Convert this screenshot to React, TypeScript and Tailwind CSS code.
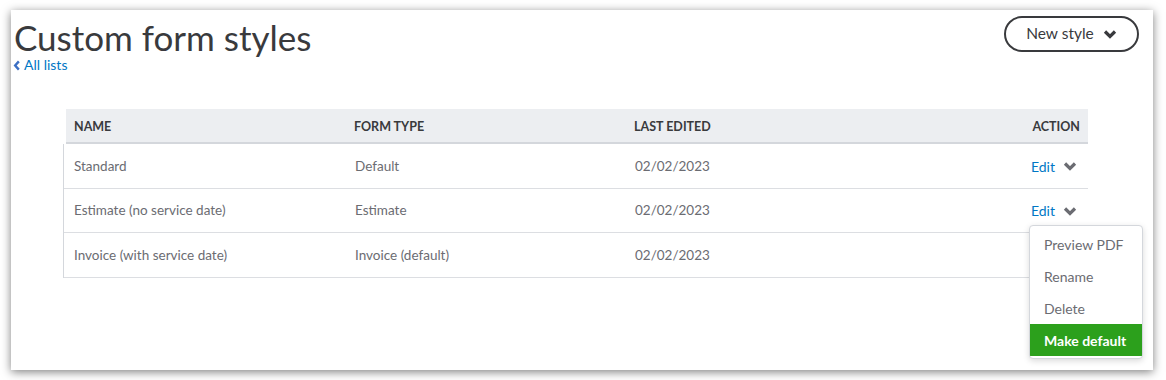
const rows = [
  { name: "Standard", type: "Default", edited: "02/02/2023", h: "h-[45px]" },
  { name: "Estimate (no service date)", type: "Estimate", edited: "02/02/2023", h: "h-[44px]" },
  { name: "Invoice (with service date)", type: "Invoice (default)", edited: "02/02/2023", h: "h-[45px]" },
];

function Chevron({ className }: { className?: string }) {
  return (
    <svg viewBox="0 0 14 10" className={className} fill="none">
      <polyline points="2,2.5 7,7.5 12,2.5" stroke="currentColor" strokeWidth="3.2" strokeLinecap="butt" strokeLinejoin="miter" />
    </svg>
  );
}

export default function App() {
  return (
    <div className="h-[380px] w-[1166px] bg-white pl-[11px] pt-[10px]" style={{ fontFamily: "Lato, 'Noto Sans', sans-serif" }}>
      <div className="relative h-[360px] w-[1142px] bg-white shadow-[0_2px_9px_rgba(0,0,0,0.5)]">
        {/* Header */}
        <div className="flex items-start justify-between pl-[3px] pr-[14px] pt-[6px]">
          <div>
            <h1 className="text-[35px] font-normal leading-[42px] text-[#393a3d]">Custom form styles</h1>
            <a className="-mt-[2px] flex items-center text-[14px] leading-[18px] text-[#0077c5]">
              <svg viewBox="0 0 8 12" className="ml-[-1px] h-[11px] w-[8px] text-[#3b6fc4]" fill="none">
                <polyline points="6,1.5 2,6 6,10.5" stroke="currentColor" strokeWidth="2.6" />
              </svg>
              <span className="ml-[3px]">All lists</span>
            </a>
          </div>
          <button className="flex h-[36px] w-[135px] items-center justify-center gap-[9px] rounded-full border-2 border-[#393a3d] text-[15.5px] text-[#393a3d]">
            New style
            <Chevron className="h-[10px] w-[14px]" />
          </button>
        </div>

        {/* Table */}
        <div className="ml-[52px] mt-[35px] w-[1025px]">
          <div className="ml-[3px] flex h-[35px] items-center border-b-2 border-[#d4d7dc] bg-[#eceef1] pt-[4px] text-[12.5px] font-bold text-[#393a3d]">
            <div className="w-[288px] pl-[8px]">NAME</div>
            <div className="w-[280px]">FORM TYPE</div>
            <div className="flex-1">LAST EDITED</div>
            <div className="pr-[8px]">ACTION</div>
          </div>
          <div className="border-l border-[#d4d7dc]">
            {rows.map((r, i) => (
              <div key={i} className={`flex items-center border-b border-[#dcdee2] text-[13.5px] text-[#6b6c72] ${r.h}`}>
                <div className="w-[291px] pl-[10px]">{r.name}</div>
                <div className="w-[280px]">{r.type}</div>
                <div className="flex-1">{r.edited}</div>
                {i < 2 && (
                  <div className="flex items-center gap-[8px] pr-[11px]">
                    <span className="text-[14px] text-[#0077c5]">Edit</span>
                    <Chevron className="h-[10px] w-[14px] text-[#6b6c72]" />
                  </div>
                )}
              </div>
            ))}
          </div>
        </div>

        {/* Dropdown */}
        <div className="absolute left-[1018px] top-[215px] w-[114px] overflow-hidden rounded-[4px] border border-[#d4d7dc] bg-white pb-[2px] pt-[2px] shadow-[0_2px_6px_rgba(0,0,0,0.15)]">
          <div className="flex h-[32px] items-center pl-[14px] text-[14px] text-[#6b6c72]">Preview PDF</div>
          <div className="flex h-[32px] items-center pl-[14px] text-[14px] text-[#6b6c72]">Rename</div>
          <div className="flex h-[32px] items-center pl-[14px] text-[14px] text-[#6b6c72]">Delete</div>
          <div className="flex h-[32px] items-center bg-[#2ca01c] pl-[14px] text-[14px] font-bold text-white">Make default</div>
        </div>
      </div>
    </div>
  );
}
